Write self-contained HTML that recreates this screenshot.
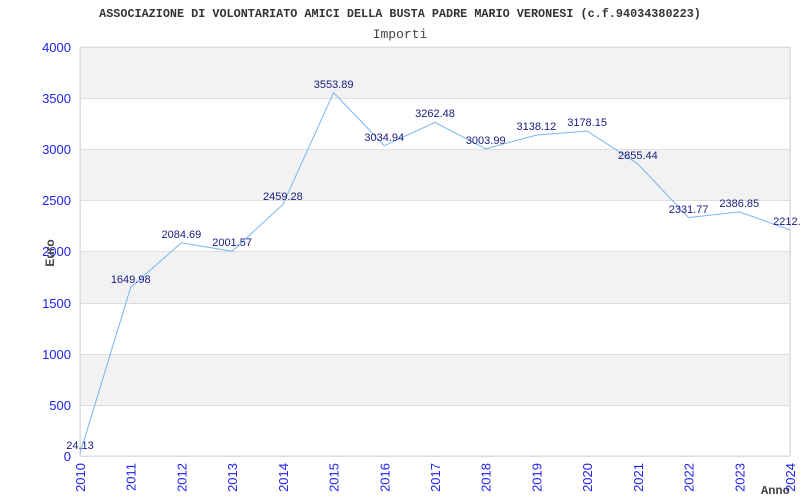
<!DOCTYPE html>
<html><head><meta charset="utf-8"><style>
html,body{margin:0;padding:0;background:#fff;width:800px;height:500px;overflow:hidden}
svg{display:block}
</style></head><body>
<svg width="800" height="500" xmlns="http://www.w3.org/2000/svg">
<text x="400" y="17" text-anchor="middle" font-family="Liberation Mono, monospace" font-weight="bold" font-size="11.8" fill="#333">ASSOCIAZIONE DI VOLONTARIATO AMICI DELLA BUSTA PADRE MARIO VERONESI (c.f.94034380223)</text>
<text x="400" y="38" text-anchor="middle" font-family="Liberation Mono, monospace" font-size="13" fill="#444">Importi</text>
<rect x="80" y="47" width="710" height="409" fill="#fff" stroke="#ddd"/>
<g fill="#f2f2f2">
<rect x="80.5" y="47.5" width="709" height="51.1"/>
<rect x="80.5" y="149.8" width="709" height="51.1"/>
<rect x="80.5" y="252" width="709" height="51.1"/>
<rect x="80.5" y="354.2" width="709" height="51.1"/>
</g>
<g stroke="#ddd" stroke-width="1">
<line x1="80" y1="98.5" x2="790" y2="98.5"/><line x1="80" y1="149.5" x2="790" y2="149.5"/>
<line x1="80" y1="200.5" x2="790" y2="200.5"/><line x1="80" y1="251.5" x2="790" y2="251.5"/>
<line x1="80" y1="303.5" x2="790" y2="303.5"/><line x1="80" y1="354.5" x2="790" y2="354.5"/>
<line x1="80" y1="405.5" x2="790" y2="405.5"/><line x1="80" y1="456.5" x2="790" y2="456.5"/>
<line x1="80.5" y1="47" x2="80.5" y2="456"/><line x1="790.5" y1="47" x2="790.5" y2="456"/>
<line x1="80" y1="47.5" x2="790" y2="47.5"/>
</g>
<g font-family="Liberation Sans, sans-serif" font-size="13" fill="#2222ee" text-anchor="end">
<text x="71" y="52">4000</text><text x="71" y="103">3500</text><text x="71" y="154">3000</text>
<text x="71" y="205">2500</text><text x="71" y="256">2000</text><text x="71" y="308">1500</text>
<text x="71" y="359">1000</text><text x="71" y="410">500</text><text x="71" y="461">0</text>
</g>
<text transform="translate(54,253) rotate(-90)" text-anchor="middle" font-family="Liberation Sans, sans-serif" font-size="12" font-weight="bold" fill="#444">Euro</text>
<text x="761" y="494" font-family="Liberation Mono, monospace" font-weight="bold" font-size="12" fill="#444">Anno</text>
<g font-family="Liberation Sans, sans-serif" font-size="13" fill="#2222ee" text-anchor="end">
<text transform="translate(85,463) rotate(-90)">2010</text>
<text transform="translate(135.7,463) rotate(-90)">2011</text>
<text transform="translate(186.4,463) rotate(-90)">2012</text>
<text transform="translate(237.1,463) rotate(-90)">2013</text>
<text transform="translate(287.9,463) rotate(-90)">2014</text>
<text transform="translate(338.6,463) rotate(-90)">2015</text>
<text transform="translate(389.3,463) rotate(-90)">2016</text>
<text transform="translate(440,463) rotate(-90)">2017</text>
<text transform="translate(490.7,463) rotate(-90)">2018</text>
<text transform="translate(541.4,463) rotate(-90)">2019</text>
<text transform="translate(592.1,463) rotate(-90)">2020</text>
<text transform="translate(642.9,463) rotate(-90)">2021</text>
<text transform="translate(693.6,463) rotate(-90)">2022</text>
<text transform="translate(744.3,463) rotate(-90)">2023</text>
<text transform="translate(795,463) rotate(-90)">2024</text>
</g>
<polyline fill="none" stroke="#7ab4f0" stroke-width="1" points="80,453.5 130.7,287.3 181.4,242.8 232.1,251.3 282.9,204.5 333.6,92.6 384.3,145.7 435,122.4 485.7,148.8 536.4,135.1 587.1,131 637.9,164 688.6,217.6 739.3,211.9 790,229.8"/>
<g font-family="Liberation Sans, sans-serif" font-size="11" fill="#1a1a80" text-anchor="middle">
<text x="80" y="449">24.13</text>
<text x="130.7" y="283">1649.98</text>
<text x="181.4" y="238">2084.69</text>
<text x="232.1" y="246">2001.57</text>
<text x="282.9" y="200">2459.28</text>
<text x="333.6" y="88">3553.89</text>
<text x="384.3" y="141">3034.94</text>
<text x="435" y="117">3262.48</text>
<text x="485.7" y="144">3003.99</text>
<text x="536.4" y="130">3138.12</text>
<text x="587.1" y="126">3178.15</text>
<text x="637.9" y="159">2855.44</text>
<text x="688.6" y="213">2331.77</text>
<text x="739.3" y="207">2386.85</text>
<text x="790" y="225">2212.6</text>
</g>
</svg>
</body></html>
